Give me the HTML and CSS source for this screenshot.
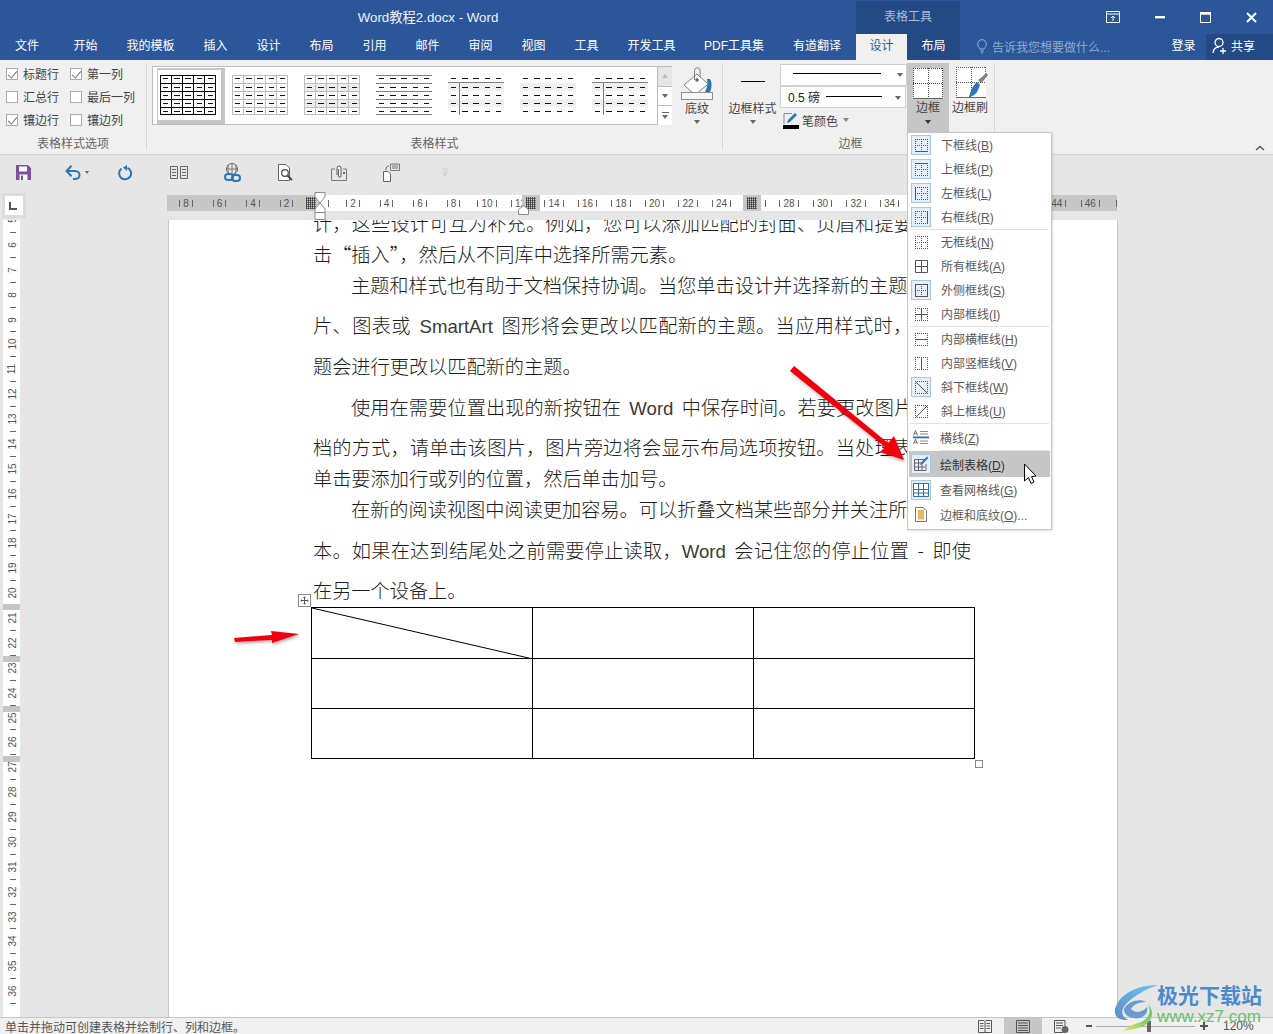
FILE: index.html
```html
<!DOCTYPE html>
<html lang="zh-CN">
<head>
<meta charset="utf-8">
<title>Word教程2.docx - Word</title>
<link rel="stylesheet" href="styles.css">
</head>
<body>
<svg class="defs" width="0" height="0" aria-hidden="true">
  <defs>
    <path id="dashes" d="M3 3.5H56M3 12.5H56M3 20.5H56M3 28.5H56M3 36.5H56" fill="none" stroke="#111" stroke-dasharray="5.4 5.8"/>
    <path id="dotgrid" d="M0 .5H13M0 6.5H13M0 12.5H13M.5 0V13M6.5 0V13M12.5 0V13" fill="none" stroke="#555" stroke-dasharray="1 1"/>
    <path id="dotbox" d="M0 .5H13M0 12.5H13M.5 0V13M12.5 0V13" fill="none" stroke="#555" stroke-dasharray="1 1"/>
  </defs>
</svg>

<header class="titlebar">
  <div class="title">Word教程2.docx - Word</div>
  <div class="context">表格工具</div>
  <div class="winbtns">
    <svg class="wb" width="14" height="12" viewBox="0 0 14 12"><path d="M.5 .5H13.500V11.500H.5ZM.5 3H13.500M7 10V5M5 7l2-2 2 2" fill="none" stroke="#fff"/></svg>
    <svg class="wb" width="10" height="3" viewBox="0 0 10 3"><rect width="10" height="2.400" fill="#fff"/></svg>
    <svg class="wb" width="11" height="11" viewBox="0 0 11 11"><path d="M.5 2H10.500V10.500H.5Z" fill="none" stroke="#fff"/><rect width="11" height="2.400" fill="#fff"/></svg>
    <svg class="wb" width="11" height="11" viewBox="0 0 11 11"><path d="M1 1L10 10M10 1L1 10" stroke="#fff" stroke-width="2"/></svg>
  </div>
</header>

<nav class="tabs">
  <a class="tab tab-file">文件</a>
  <a class="tab">开始</a>
  <a class="tab tab-4">我的模板</a>
  <a class="tab">插入</a>
  <a class="tab">设计</a>
  <a class="tab">布局</a>
  <a class="tab">引用</a>
  <a class="tab">邮件</a>
  <a class="tab">审阅</a>
  <a class="tab">视图</a>
  <a class="tab">工具</a>
  <a class="tab tab-4">开发工具</a>
  <a class="tab tab-pdf">PDF工具集</a>
  <a class="tab tab-yd">有道翻译</a>
  <a class="tab tab-active">设计</a>
  <a class="tab tab-dark">布局</a>
  <div class="tell">
    <svg width="10" height="15" viewBox="0 0 10 15"><path d="M3 10C2 8 .7 7.500 .7 5a4.300 4.300 0 0 1 8.600 0C9.300 7.500 8 8 7 10ZM3.200 12H6.800M4 14H6" fill="none" stroke="#9db4d6"/></svg>
    <span>告诉我您想要做什么...</span>
  </div>
  <a class="login">登录</a>
  <div class="share">
    <svg width="16" height="18" viewBox="0 0 16 18"><circle cx="7" cy="5.500" r="4" fill="none" stroke="#fff" stroke-width="1.300"/><path d="M1 16C1.500 12 4 10 7 10M11 11V17M8 14H14" fill="none" stroke="#fff" stroke-width="1.300"/></svg>
    <span>共享</span>
  </div>
</nav>

<section class="ribbon">
  <div class="group g-opts">
    <div class="group-body checks">
      <label class="chk"><i class="box on"></i>标题行</label>
      <label class="chk"><i class="box on"></i>第一列</label>
      <label class="chk"><i class="box"></i>汇总行</label>
      <label class="chk"><i class="box"></i>最后一列</label>
      <label class="chk"><i class="box on"></i>镶边行</label>
      <label class="chk"><i class="box"></i>镶边列</label>
    </div>
    <div class="group-label">表格样式选项</div>
  </div>

  <div class="group g-styles">
    <div class="group-body row">
      <div class="gallery">
        <div class="cell sel"><svg class="thumb" width="56" height="40"><path d="M.5 .5H55.500V39.500H.5ZM11.500 0V40M22.500 0V40M33.500 0V40M44.500 0V40M0 8.500H56M0 16.500H56M0 24.500H56M0 32.500H56" fill="none" stroke="#000"/><use href="#dashes"/></svg></div>
        <div class="cell"><svg class="thumb" width="56" height="40"><path d="M.5 .5H55.500V39.500H.5ZM11.500 0V40M22.500 0V40M33.500 0V40M44.500 0V40M0 8.500H56M0 16.500H56M0 24.500H56M0 32.500H56" fill="none" stroke="#bcbcbc"/><use href="#dashes"/></svg></div>
        <div class="cell"><svg class="thumb" width="56" height="40"><path d="M0 8H56V16H0ZM0 24H56V32H0Z" fill="#ededed"/><path d="M.5 .5H55.500V39.500H.5ZM11.500 0V40M22.500 0V40M33.500 0V40M44.500 0V40M0 8.500H56M0 16.500H56M0 24.500H56M0 32.500H56" fill="none" stroke="#bcbcbc"/><use href="#dashes"/></svg></div>
        <div class="cell"><svg class="thumb" width="56" height="40"><path d="M0 .5H56M0 8.500H56M0 16.500H56M0 24.500H56M0 32.500H56M0 39.500H56" fill="none" stroke="#808080"/><use href="#dashes"/></svg></div>
        <div class="cell"><svg class="thumb" width="56" height="40"><path d="M0 8H56V16H0ZM0 24H56V32H0Z" fill="#f0f0f0"/><path d="M0 7.500H56M11.500 8V40" fill="none" stroke="#808080"/><use href="#dashes"/></svg></div>
        <div class="cell"><svg class="thumb" width="56" height="40"><path d="M0 8H56V16H0ZM0 24H56V32H0Z" fill="#f0f0f0"/><use href="#dashes"/></svg></div>
        <div class="cell"><svg class="thumb" width="56" height="40"><path d="M0 8H56V16H0ZM0 24H56V32H0Z" fill="#f0f0f0"/><path d="M0 7.500H56M11.500 8V40" fill="none" stroke="#808080"/><use href="#dashes"/></svg></div>
        <div class="scroll">
          <div class="sc sc-off"><i class="up"></i></div>
          <div class="sc"><i class="caret"></i></div>
          <div class="sc sc-more"><b></b><i class="caret"></i></div>
        </div>
      </div>
      <div class="big b-shade">
        <div class="big-ic">
          <svg width="32" height="36" viewBox="0 0 32 36"><path d="M29 14c2 3 2 8 0 13h-5c2-4 3-8 2-13Z" fill="#2e75b6"/><path d="M16 9L3 20 14 30 27 19Z" fill="#fff" stroke="#808080"/><path d="M13.500 15V5.500a2.800 2.800 0 0 1 5.600 0V12" fill="none" stroke="#808080"/><circle cx="16" cy="15" r="1.800" fill="#666"/><rect x=".5" y="27.500" width="31" height="7" fill="#f7f7f7" stroke="#909090"/></svg>
        </div>
        <span>底纹</span><i class="caret"></i>
      </div>
    </div>
    <div class="group-label">表格样式</div>
  </div>

  <div class="group g-border">
    <div class="group-body row">
      <div class="big b-style">
        <div class="big-ic"><i class="hline"></i></div>
        <span>边框样式</span><i class="caret"></i>
      </div>
      <div class="pen">
        <div class="sel1"><i class="line l1"></i><i class="caret"></i></div>
        <div class="sel2"><span>0.5 磅</span><i class="line l2"></i><i class="caret"></i></div>
        <div class="pencolor">
          <svg width="16" height="17" viewBox="0 0 16 17"><path d="M1 12V1.500H9" fill="none" stroke="#888"/><path d="M4 11L5 8 12 1l2 2-7 7Z" fill="#2e75b6"/><rect y="13" width="16" height="4" fill="#000"/></svg>
          <span>笔颜色</span><i class="caret"></i>
        </div>
      </div>
      <div class="big b-frame">
        <div class="big-ic">
          <svg width="30" height="31" viewBox="0 0 30 31"><rect width="30" height="30" fill="#fff"/><path d="M0 .5H30M0 15.500H30M.5 0V30M15.500 0V30M29.500 0V30" fill="none" stroke="#444" stroke-dasharray="1 1"/><path d="M0 30.500H30" stroke="#666"/></svg>
        </div>
        <span>边框</span><i class="caret"></i>
      </div>
      <div class="big b-brush">
        <div class="big-ic">
          <svg width="32" height="33" viewBox="0 0 32 33"><rect width="30" height="30" fill="#fff"/><path d="M0 .5H30M0 15.500H30M.5 0V30M15.500 0V30M29.500 0V10" fill="none" stroke="#555" stroke-dasharray="1 1"/><path d="M0 30.500H30" stroke="#3a6ea5"/><path d="M26 10l4-4 2 2-4 5-3 3-3-3Z" fill="#808080"/><path d="M21 15l3 3-2 5c-1 3-4 6-9 7.500 1-5 3-11 8-15.500Z" fill="#2e75b6"/></svg>
        </div>
        <span>边框刷</span>
      </div>
    </div>
    <div class="group-label lab-border">边框</div>
  </div>

  <svg class="collapse" width="10" height="6" viewBox="0 0 10 6"><path d="M1 5L5 1.500 9 5" fill="none" stroke="#555" stroke-width="1.500"/></svg>
</section>

<section class="qat">
  <div class="q q-first"><svg width="15" height="15" viewBox="0 0 15 15"><path d="M0 0H12L15 3V15H0Z" fill="#7d52a6"/><rect x="3" y="1.500" width="8" height="5" fill="#fff"/><rect x="3.500" y="9.500" width="8" height="5.500" fill="#fff"/><rect x="5" y="10.500" width="2" height="4.500" fill="#7d52a6"/></svg></div>
  <div class="q q-undo"><svg width="16" height="15" viewBox="0 0 16 15"><path d="M2 6H10C13 6 14.500 8 14.500 10S13 14 10 14H8" fill="none" stroke="#2e75b6" stroke-width="2"/><path d="M6.500 .8L1.500 6 6.500 11.200" fill="none" stroke="#2e75b6" stroke-width="2"/></svg><i class="caret"></i></div>
  <div class="q"><svg width="15" height="16" viewBox="0 0 15 16"><path d="M9.500 2.800A6 6 0 1 1 3.500 3.500" fill="none" stroke="#2e75b6" stroke-width="2"/><path d="M9 0V6L5 2.500Z" fill="#2e75b6"/></svg></div>
  <div class="q"><svg width="18" height="13" viewBox="0 0 18 13"><path d="M.5 .5H7.500V12.500H.5ZM10.500 .5H17.500V12.500H10.500ZM2 3.500H6M2 6.500H6M2 9.500H6M12 3.500H16M12 6.500H16M12 9.500H16" fill="none" stroke="#666"/></svg></div>
  <div class="q"><svg width="17" height="19" viewBox="0 0 17 19"><circle cx="8" cy="6" r="5.500" fill="none" stroke="#666"/><path d="M2.500 6H13.500M8 .5V11.500M4.500 1.500C3.500 6 4 9 5 11M11.500 1.500C12.500 6 12 9 11 11" fill="none" stroke="#666" stroke-width=".8"/><rect x="1" y="11" width="8" height="6" rx="3" fill="none" stroke="#2e75b6" stroke-width="2"/><rect x="8" y="12" width="8" height="6" rx="3" fill="none" stroke="#2e75b6" stroke-width="2"/></svg></div>
  <div class="q"><svg width="15" height="17" viewBox="0 0 15 17"><path d="M.5 .5H8L11.500 4V16.500H.5Z" fill="#fff" stroke="#666"/><circle cx="7" cy="9" r="3.300" fill="#fff" stroke="#444" stroke-width="1.200"/><path d="M9.500 11.500L14 16" stroke="#444" stroke-width="1.800"/></svg></div>
  <div class="q"><svg width="16" height="16" viewBox="0 0 16 16"><path d="M4 4H.5V15.500H15.500V4H12" fill="none" stroke="#777"/><path d="M6 10V3a2 2 0 0 1 4 0V11a1.200 1.200 0 0 1-2.400 0V4" fill="#fff" stroke="#555"/><rect x="12" y="7" width="2" height="2" fill="#2e75b6"/></svg></div>
  <div class="q"><svg width="17" height="19" viewBox="0 0 17 19"><path d="M7.500 1H16.500V7.500H7.500ZM9 3H15M9 5H15" fill="none" stroke="#777"/><path d="M.5 8.500H5L7.500 11V18.500H.5Z" fill="#fff" stroke="#666"/><path d="M3 7C3 4 4 3 6 3" fill="none" stroke="#2e75b6"/></svg></div>
  <div class="q q-ghost"><svg width="8" height="9" viewBox="0 0 8 9"><path d="M1 1H7M1 4H7M2 6H6L4 8Z" fill="#d0d0d0" stroke="#d0d0d0"/></svg></div>
</section>

<section class="rulerbar">
  <div class="corner"><i></i></div>
  <div class="hruler">
    <div class="seg dark s1">
      <span class="n">8</span><span class="n">6</span><span class="n">4</span><span class="n">2</span><i class="hatch h-left"></i>
    </div>
    <div class="seg s2">
      <span class="lead"></span><span class="n">2</span><span class="n">4</span><span class="n">6</span><span class="n">8</span><span class="n">10</span><span class="n">12</span>
    </div>
    <div class="seg dark s3"><i class="hatch"></i></div>
    <div class="seg s4">
      <span class="n">14</span><span class="n">16</span><span class="n">18</span><span class="n">20</span><span class="n">22</span><span class="n">24</span>
    </div>
    <div class="seg dark s3"><i class="hatch"></i></div>
    <div class="seg s5">
      <span class="lead lead2"></span><span class="n">28</span><span class="n">30</span><span class="n">32</span><span class="n">34</span><span class="n">36</span><span class="n">38</span><span class="n">40</span><span class="n">42</span>
    </div>
    <div class="seg dark s6"><span class="n">44</span><span class="n">46</span><i class="tick-end"></i></div>
    <svg class="marker m-indent" width="12" height="28" viewBox="0 0 12 28"><path d="M1 .5H11V5L6 11 11 17V27.500H1V17L6 11 1 5Z" fill="#fff" stroke="#8a8a8a"/><path d="M1 20.500H11" stroke="#8a8a8a"/></svg>
    <svg class="marker m-right" width="11" height="10" viewBox="0 0 11 10"><path d="M.5 9.500V4.500L5.500 .5 10.500 4.500V9.500Z" fill="#fff" stroke="#8a8a8a"/></svg>
  </div>
</section>

<main class="workspace">
  <div class="vruler">
    <span class="vn"><b>5</b></span><span class="vd"></span>
    <span class="vn"><b>6</b></span><span class="vd"></span>
    <span class="vn"><b>7</b></span><span class="vd"></span>
    <span class="vn"><b>8</b></span><span class="vd"></span>
    <span class="vn"><b>9</b></span><span class="vd"></span>
    <span class="vn"><b>10</b></span><span class="vd"></span>
    <span class="vn"><b>11</b></span><span class="vd"></span>
    <span class="vn"><b>12</b></span><span class="vd"></span>
    <span class="vn"><b>13</b></span><span class="vd"></span>
    <span class="vn"><b>14</b></span><span class="vd"></span>
    <span class="vn"><b>15</b></span><span class="vd"></span>
    <span class="vn"><b>16</b></span><span class="vd"></span>
    <span class="vn"><b>17</b></span><span class="vd"></span>
    <span class="vn"><b>18</b></span><span class="vd"></span>
    <span class="vn"><b>19</b></span><span class="vd"></span>
    <span class="vn"><b>20</b></span><span class="vd"></span>
    <span class="vn"><b>21</b></span><span class="vd"></span>
    <span class="vn"><b>22</b></span><span class="vd"></span>
    <span class="vn"><b>23</b></span><span class="vd"></span>
    <span class="vn"><b>24</b></span><span class="vd"></span>
    <span class="vn"><b>25</b></span><span class="vd"></span>
    <span class="vn"><b>26</b></span><span class="vd"></span>
    <span class="vn"><b>27</b></span><span class="vd"></span>
    <span class="vn"><b>28</b></span><span class="vd"></span>
    <span class="vn"><b>29</b></span><span class="vd"></span>
    <span class="vn"><b>30</b></span><span class="vd"></span>
    <span class="vn"><b>31</b></span><span class="vd"></span>
    <span class="vn"><b>32</b></span><span class="vd"></span>
    <span class="vn"><b>33</b></span><span class="vd"></span>
    <span class="vn"><b>34</b></span><span class="vd"></span>
    <span class="vn"><b>35</b></span><span class="vd"></span>
    <span class="vn"><b>36</b></span><span class="vd"></span>
    <i class="band b1"></i><i class="band b2"></i><i class="band b3"></i><i class="band b4"></i>
  </div>
  <article class="page">
    <div class="text">
      <p class="ln">计，这些设计可互为补充。例如，您可以添加匹配的封面、页眉和提要栏。单</p>
      <p class="ln end">击“插入”，然后从不同库中选择所需元素。</p>
      <p class="ln ind end">主题和样式也有助于文档保持协调。当您单击设计并选择新的主题时，图</p>
      <p class="ln tall">片、图表或 <span class="la">SmartArt</span> 图形将会更改以匹配新的主题。当应用样式时，您的标</p>
      <p class="ln tall end">题会进行更改以匹配新的主题。</p>
      <p class="ln tall ind">使用在需要位置出现的新按钮在 <span class="la">Word</span> 中保存时间。若要更改图片适应文</p>
      <p class="ln tall">档的方式，请单击该图片，图片旁边将会显示布局选项按钮。当处理表格时，</p>
      <p class="ln end">单击要添加行或列的位置，然后单击加号。</p>
      <p class="ln ind end">在新的阅读视图中阅读更加容易。可以折叠文档某些部分并关注所需文</p>
      <p class="ln tall">本。如果在达到结尾处之前需要停止读取，<span class="la">Word</span> 会记住您的停止位置 - 即使</p>
      <p class="ln tall end">在另一个设备上。</p>
    </div>
    <div class="tablewrap">
      <svg class="movehandle" width="13" height="13" viewBox="0 0 13 13"><rect x=".5" y=".5" width="12" height="12" fill="#fff" stroke="#8a8a8a"/><path d="M6.500 2.500V10.500M2.500 6.500H10.500M5.500 3.500H7.500M5.500 9.500H7.500M3.500 5.500V7.500M9.500 5.500V7.500" stroke="#555"/></svg>
      <table class="doc-table">
        <tr class="r1"><td class="diag"><svg class="diag-line" width="221" height="51" viewBox="0 0 221 51"><path d="M0 0L221 51" stroke="#000" fill="none"/></svg></td><td></td><td></td></tr>
        <tr><td></td><td></td><td></td></tr>
        <tr><td></td><td></td><td></td></tr>
      </table>
      <i class="resizehandle"></i>
    </div>
  </article>
</main>

<footer class="status">
  <span class="status-text">单击并拖动可创建表格并绘制行、列和边框。</span>
  <div class="views">
    <div class="v"><svg width="14" height="13" viewBox="0 0 14 13"><path d="M.5 .5H6L7 1.500 8 .5H13.500V12.500H.5ZM7 1.500V12M2 3.500H5.500M2 6H5.500M2 8.500H5.500M8.500 3.500H12M8.500 6H12M8.500 8.500H12" fill="none" stroke="#555"/></svg></div>
    <div class="v v-on"><svg width="14" height="13" viewBox="0 0 14 13"><path d="M.5 .5H13.500V12.500H.5ZM2 3H12M2 5.500H12M2 8H12M2 10.500H12" fill="none" stroke="#555"/></svg></div>
    <div class="v"><svg width="15" height="13" viewBox="0 0 15 13"><path d="M9 12.500H.5V.5H11V6M2 3H9M2 5.500H9M2 8H7" fill="none" stroke="#555"/><circle cx="11" cy="9.500" r="3.500" fill="#666"/></svg></div>
  </div>
  <div class="zoom">
    <i class="zminus"></i>
    <div class="ztrack"><i class="zthumb"></i></div>
    <i class="zplus"></i>
    <span class="zval">120%</span>
  </div>
</footer>

<div class="menu">
  <div class="mrow"><span class="mi on"><svg width="13" height="13"><use href="#dotgrid"/><path d="M0 12.500H13" stroke="#555"/></svg></span><span class="mt">下框线(<u>B</u>)</span></div>
  <div class="mrow"><span class="mi on"><svg width="13" height="13"><use href="#dotgrid"/><path d="M0 .5H13" stroke="#555"/></svg></span><span class="mt">上框线(<u>P</u>)</span></div>
  <div class="mrow"><span class="mi on"><svg width="13" height="13"><use href="#dotgrid"/><path d="M.5 0V13" stroke="#555"/></svg></span><span class="mt">左框线(<u>L</u>)</span></div>
  <div class="mrow"><span class="mi on"><svg width="13" height="13"><use href="#dotgrid"/><path d="M12.500 0V13" stroke="#555"/></svg></span><span class="mt">右框线(<u>R</u>)</span></div>
  <div class="msep"></div>
  <div class="mrow"><span class="mi"><svg width="13" height="13"><use href="#dotgrid"/></svg></span><span class="mt">无框线(<u>N</u>)</span></div>
  <div class="mrow"><span class="mi"><svg width="13" height="13"><path d="M.5 .5H12.500V12.500H.5ZM6.500 0V13M0 6.500H13" fill="none" stroke="#555"/></svg></span><span class="mt">所有框线(<u>A</u>)</span></div>
  <div class="mrow"><span class="mi on"><svg width="13" height="13"><use href="#dotgrid"/><path d="M.5 .5H12.500V12.500H.5Z" fill="none" stroke="#555"/></svg></span><span class="mt">外侧框线(<u>S</u>)</span></div>
  <div class="mrow"><span class="mi"><svg width="13" height="13"><use href="#dotbox"/><path d="M6.500 0V13M0 6.500H13" fill="none" stroke="#555"/></svg></span><span class="mt">内部框线(<u>I</u>)</span></div>
  <div class="msep"></div>
  <div class="mrow"><span class="mi"><svg width="13" height="13"><use href="#dotbox"/><path d="M0 6.500H13" fill="none" stroke="#555"/></svg></span><span class="mt">内部横框线(<u>H</u>)</span></div>
  <div class="mrow"><span class="mi"><svg width="13" height="13"><use href="#dotbox"/><path d="M6.500 0V13" fill="none" stroke="#555"/></svg></span><span class="mt">内部竖框线(<u>V</u>)</span></div>
  <div class="mrow"><span class="mi on"><svg width="13" height="13"><use href="#dotbox"/><path d="M0 0L13 13" stroke="#555"/></svg></span><span class="mt">斜下框线(<u>W</u>)</span></div>
  <div class="mrow"><span class="mi"><svg width="13" height="13"><use href="#dotbox"/><path d="M13 0L0 13" stroke="#555"/></svg></span><span class="mt">斜上框线(<u>U</u>)</span></div>
  <div class="msep"></div>
  <div class="mrow m26"><span class="mi"><svg width="16" height="14" viewBox="0 0 16 14"><path d="M7 1.500H15M7 4H15M7 11H15M7 13.500H15" stroke="#888"/><rect y="6.500" width="16" height="1.800" fill="#2e6db4"/><path d="M.5 5.500L2.500 .5 4.500 5.500M1.300 3.800H3.700M.5 14L2.500 9 4.500 14M1.300 12.300H3.700" fill="none" stroke="#555" stroke-width=".8"/></svg></span><span class="mt mt2">横线(<u>Z</u>)</span></div>
  <div class="msep sep-short"></div>
  <div class="mrow m26 hover"><span class="mi on"><svg width="16" height="16" viewBox="0 0 16 16"><path d="M1.500 3.500H12M1.500 3.500V14.500H13V8M1.500 7H8M5.500 4V14M9 8V14M2 11H12" fill="none" stroke="#666"/><path d="M7 9L8 6.500 14 .5 15.500 2 9.500 8Z" fill="#2e75b6"/></svg></span><span class="mt mt2">绘制表格(<u>D</u>)</span></div>
  <div class="mrow m25"><span class="mi on"><svg width="16" height="14" viewBox="0 0 16 14"><rect width="16" height="3.500" fill="#2e6db4"/><path d="M.5 .5H15.500V13.500H.5ZM5.500 1V14M10.500 1V14M1 6.500H15M1 10H15" fill="#fff" stroke="#2e6db4"/></svg></span><span class="mt mt2">查看网格线(<u>G</u>)</span></div>
  <div class="mrow m25"><span class="mi"><svg width="12" height="15" viewBox="0 0 12 15"><path d="M.5 .5H8L11.500 3.500V14.500H.5Z" fill="#fff" stroke="#777"/><rect x="3" y="3" width="6" height="9.500" fill="#e8b95f"/></svg></span><span class="mt mt2">边框和底纹(<u>O</u>)...</span></div>
</div>

<svg class="overlay" width="1273" height="1034" viewBox="0 0 1273 1034" aria-hidden="true">
  <defs>
    <filter id="sh" x="-20%" y="-40%" width="140%" height="200%"><feDropShadow dx="1" dy="2" stdDeviation="1.500" flood-color="#000" flood-opacity=".3"/></filter>
    <linearGradient id="lgb" x1="0" y1="1" x2="1" y2="0"><stop offset="0" stop-color="#5d8fc9"/><stop offset="1" stop-color="#6fc5ee"/></linearGradient>
    <linearGradient id="lgg" x1="0" y1="1" x2="1" y2="0"><stop offset="0" stop-color="#e8e55a"/><stop offset=".6" stop-color="#7ccc6a"/><stop offset="1" stop-color="#5cc06a"/></linearGradient>
  </defs>
  <path d="M790 371L794 366 888 443 894 436 904 460 880 452 885 447Z" fill="#ee0010" filter="url(#sh)"/>
  <path d="M234 638L272 635 271 631 299 634 272 643 272 640 235 642Z" fill="#ee0010" filter="url(#sh)"/>
  <path d="M1024.500 464V481L1028.500 477.500 1031 483.500 1034 482 1031.500 476.500 1036 476Z" fill="#fff" stroke="#000"/>
  <path d="M1158 985C1140 985 1122 992 1116 1006 1112 1015 1118 1021 1128 1020 1121 1016 1120 1010 1127 1003 1134 996 1146 989 1158 985Z" fill="url(#lgb)"/>
  <path d="M1124 1009C1128 1001 1140 998 1146 1002 1138 1002 1133 1005 1131 1009 1136 1014 1143 1012 1147 1007 1149 1014 1141 1020 1133 1018 1128 1017 1124 1014 1124 1009Z" fill="#6a9ad0"/>
  <path d="M1134 1029C1150 1027 1157 1014 1148 1004 1153 1014 1146 1021 1138 1023 1134 1024 1130 1026 1123 1031 1127 1030 1131 1030 1134 1029Z" fill="url(#lgg)"/>
</svg>
<div class="wm">
  <span class="wm1">极光下载站</span>
  <span class="wm2">www.xz7.com</span>
</div>
</body>
</html>
```

FILE: styles.css
```css
* { box-sizing: border-box; }
html, body { margin: 0; padding: 0; }
body {
  width: 1273px;
  height: 1034px;
  overflow: hidden;
  position: relative;
  display: flex;
  flex-direction: column;
  background: #e6e6e6;
  font-family: "Liberation Sans", "Noto Sans CJK SC", sans-serif;
  font-size: 12px;
  color: #444;
}
i { display: block; font-style: normal; }
.defs { position: absolute; }

/* title bar */
.titlebar { height: 34px; flex: none; display: flex; background: #2b579a; color: #fff; }
.title { width: 856px; height: 34px; line-height: 35px; text-align: center; font-size: 13.300px; color: #eef2f8; }
.context { width: 104px; margin-top: 1px; height: 33px; line-height: 33px; text-align: center; background: #234a85; color: #a9bcd8; }
.winbtns { flex: 1; display: flex; align-items: center; }
.wb:nth-child(1) { margin-left: 146px; }
.wb:nth-child(2) { margin-left: 35px; }
.wb:nth-child(3) { margin-left: 35px; }
.wb:nth-child(4) { margin-left: 35px; }

/* tabs */
.tabs { height: 26px; flex: none; display: flex; background: #2b579a; color: #fff; }
.tab { width: 53px; text-align: center; line-height: 24px; flex: none; }
.tab-4 { width: 77px; }
.tab-pdf { width: 88px; }
.tab-yd { width: 78px; }
.tab-file { width: 59px; padding-right: 5px; }
.tab-active { width: 51px; background: #f0f0f0; color: #2b579a; }
.tab-dark { background: #234a85; }
.tell { width: 201px; display: flex; align-items: center; gap: 5px; padding-left: 17px; padding-bottom: 1px; color: #90a9cf; }
.login { width: 45px; text-align: center; line-height: 24px; }
.share { flex: 1; display: flex; align-items: center; gap: 3px; padding: 0 0 3px 6px; background: #234a85; }

/* ribbon */
.ribbon { height: 95px; flex: none; display: flex; background: #f0f0f0; border-bottom: 1px solid #d2d2d2; padding-top: 3px; }
.group { height: 87px; display: flex; flex-direction: column; border-right: 1px solid #d8d8d8; }
.group-body { height: 73px; }
.group-label { height: 14px; line-height: 15px; padding-top: 1px; text-align: center; color: #666; }
.row { display: flex; }
.g-opts { width: 147px; }
.checks { display: grid; grid-template-columns: 64px auto; grid-auto-rows: 23px; padding-left: 6px; margin-top: -1px; height: 74px; }
.chk { display: flex; align-items: center; gap: 5px; }
.box { width: 12px; height: 12px; border: 1px solid #ababab; background: #fff; position: relative; margin-top: 1px; }
.box.on::after {
  content: ""; position: absolute; left: 3px; top: 0; width: 4px; height: 8px;
  border: solid #777; border-width: 0 1.300px 1.300px 0; transform: rotate(40deg);
}
.g-styles { width: 576px; }
.gallery { width: 520px; height: 59px; margin: 3px 0 0 5px; padding-top: 1px; display: flex; background: #fff; border: 1px solid #bcbcbc; }
.cell { width: 72px; height: 56px; flex: none; display: flex; justify-content: center; align-items: center; padding: 0 2px 2px 0; }
.cell.sel {
  width: 68px; margin-left: 4px; justify-content: flex-start; padding: 0 0 0 2px;
  border: solid #c6c6c6; border-width: 2px 4px 4px 1px;
}
.thumb { display: block; shape-rendering: crispEdges; }
.scroll { flex: none; width: 15px; margin: -1px -1px -1px auto; display: flex; flex-direction: column; border-left: 1px solid #bcbcbc; }
.sc { flex: 1; display: flex; flex-direction: column; align-items: center; justify-content: center; background: #fff; border-top: 1px solid #bcbcbc; }
.sc:first-child { border-top: 0; }
.sc-off { background: #e6e6e6; }
.up { width: 0; height: 0; border: solid transparent; border-width: 0 3px 4px; border-bottom-color: #bbb; }
.sc-more b { display: block; width: 7px; height: 1px; background: #666; margin-bottom: 2px; }
.caret { width: 0; height: 0; border: solid transparent; border-width: 4px 3.500px 0; border-top-color: #666; flex: none; }

.big { display: flex; flex-direction: column; align-items: center; height: 69px; flex: none; }
.big-ic { height: 37px; display: flex; align-items: center; justify-content: center; }
.big span { height: 16px; line-height: 16px; white-space: nowrap; }
.big .caret { margin-top: 4px; }
.b-shade .big-ic, .b-style .big-ic { height: 38px; }
.b-shade .caret, .b-style .caret { margin-top: 3px; }
.b-shade { width: 36px; margin-left: 7px; }
.b-shade .big-ic { padding-top: 2px; }
.b-style .big-ic { padding-bottom: 1px; }
.g-border { width: 272px; }
.b-style { width: 49px; margin-left: 5px; }
.hline { width: 24px; height: 1px; background: #000; }
.pen { width: 127px; margin-left: 3px; }
.sel1, .sel2 { position: relative; display: flex; align-items: center; background: #fff; border: 1px solid #d0d0d0; }
.sel1 { height: 22px; margin-top: 1px; padding-left: 12px; }
.sel2 { height: 22px; width: 126px; padding: 0 0 2px 7px; color: #222; }
.line { height: 1px; background: #000; }
.l1 { width: 88px; margin-bottom: 3px; }
.l2 { width: 56px; margin-left: 6px; }
.sel1 .caret { position: absolute; right: 3px; top: 8px; }
.sel2 .caret { position: absolute; right: 4px; top: 9px; }
.pencolor { height: 22px; margin-top: 1px; padding-left: 3px; display: flex; align-items: center; }
.pencolor span { margin-left: 3px; }
.pencolor .caret { margin-left: 5px; border-top-color: #888; }
.b-frame { width: 42px; background: #c6c6c6; }
.b-frame .big-ic { padding-top: 3px; }
.b-frame .caret { border-top-color: #333; }
.b-brush { width: 38px; margin-left: 2px; }
.b-brush .big-ic { padding-top: 3px; padding-left: 3px; }
.lab-border { padding-right: 16px; }
.collapse { margin: auto 8px 3px auto; align-self: flex-end; }

/* quick access */
.qat { height: 35px; flex: none; display: flex; align-items: center; background: #e6e6e6; }
.q { width: 53.200px; display: flex; justify-content: center; align-items: center; flex: none; }
.q-first { width: 46px; }
.q-undo { gap: 4px; padding-left: 9px; }
.q-undo .caret { border-width: 3px 2.500px 0; }

/* rulers */
.rulerbar { height: 30px; flex: none; display: flex; background: #e6e6e6; }
.corner { width: 24px; height: 25px; margin: 3px 0 0 2px; background: #fff; border: 3px solid #dcdcdc; position: relative; flex: none; }
.corner i { position: absolute; left: 4px; top: 6px; width: 8px; height: 8px; border: solid #555; border-width: 0 0 2px 2px; }
.hruler { margin: 5px 0 0 141px; height: 16px; display: flex; position: relative; width: 950px; }
.seg { height: 16px; display: flex; align-items: center; background: #fff; overflow: hidden; flex: none; }
.dark { background: #c6c6c6; }
.n { width: 33.500px; flex: none; display: flex; justify-content: center; align-items: center; gap: 3px; font-size: 10px; color: #555; line-height: 16px; padding-top: 1px; }
.n::before, .n::after, .lead::before, .tick-end { content: ""; display: block; width: 1px; height: 7px; background: #666; }
.lead { flex: none; width: 16.250px; padding-left: 8px; }
.lead2 { width: 11.250px; padding-left: 4px; }
.s1 { width: 153px; padding-left: 2.250px; }
.s2 { width: 202px; }
.s3 { width: 18px; justify-content: center; }
.s4 { width: 203px; }
.s4 .n:first-child { margin-left: -2.750px; }
.s5 { width: 279px; }
.s6 { width: 77px; }
.tick-end { margin-left: auto; }
.hatch {
  width: 10px; height: 12px; flex: none;
  background: repeating-linear-gradient(90deg, #777 0 1px, transparent 1px 2px), repeating-linear-gradient(0deg, #777 0 1px, #c6c6c6 1px 2px);
  background-blend-mode: multiply;
}
.h-left { margin-left: 3px; }
.marker { position: absolute; }
.m-indent { left: 147px; top: -3px; }
.m-right { left: 351px; top: 10px; }

/* workspace */
.workspace { flex: 1; min-height: 0; display: flex; background: #e6e6e6; overflow: hidden; }
.vruler { width: 17px; margin-left: 3px; padding-left: 2px; background: #fff; flex: none; position: relative; height: 100%; overflow: hidden; display: flex; flex-direction: column; }
.vn, .vd { height: 12.450px; flex: none; display: flex; align-items: center; justify-content: center; }
.vn:first-child { margin-top: -6.200px; }
.vn b { font-weight: 400; font-size: 10px; color: #555; line-height: 10px; transform: rotate(-90deg); white-space: nowrap; }
.vd::before { content: ""; display: block; width: 6px; height: 1px; background: #666; }
.band { position: absolute; left: 0; right: 0; height: 6px; background: #c6c6c6; }
.b1 { top: 384px; }
.b2 { top: 436px; }
.b3 { top: 486px; }
.b4 { top: 536px; }
.page { width: 950px; margin-left: 148px; height: 100%; flex: none; background: #fff; border: solid #c6c6c6; border-width: 0 1px; padding-left: 144px; overflow: hidden; }
.text { width: 658px; margin-top: -11.700px; font-family: "Noto Sans CJK SC", sans-serif; font-weight: 300; font-size: 19.200px; color: #1c1c1c; word-spacing: 4px; }
.ln { margin: 0; line-height: 30.700px; height: 30.700px; text-align: justify; text-align-last: justify; white-space: nowrap; }
.tall { height: 40.700px; padding-top: 10px; }
.end { text-align-last: left; }
.ind { text-indent: 38px; }
.la { font-family: "Liberation Sans", sans-serif; font-weight: 400; font-size: 18.600px; color: #3a3a3a; }
.tablewrap { position: relative; width: 664px; margin: 1px 0 0 -2px; }
.doc-table { border-collapse: collapse; width: 664px; table-layout: fixed; }
.doc-table td { border: 1px solid #000; height: 50px; padding: 0; position: relative; }
.doc-table .r1 td { height: 51px; }
.diag-line { position: absolute; left: 0; top: 0; display: block; }
.movehandle { position: absolute; left: -13px; top: -13px; display: block; }
.resizehandle { position: absolute; left: 664px; top: 153px; width: 8px; height: 8px; background: #fff; border: 1px solid #8a8a8a; }

/* status bar */
.status { height: 17px; flex: none; display: flex; align-items: center; background: #f0f0f0; border-top: 1px solid #c6c6c6; padding-left: 5px; color: #555; }
.status-text { width: 956px; flex: none; white-space: nowrap; }
.views { display: flex; height: 16px; margin-left: 5px; }
.v { width: 38px; display: flex; align-items: center; justify-content: center; }
.v-on { background: #c6c6c6; }
.zoom { display: flex; align-items: center; margin-left: 6px; }
.zminus { width: 6px; height: 2px; background: #555; }
.ztrack { width: 99px; height: 1px; background: #aaa; margin-left: 4px; position: relative; }
.zthumb { position: absolute; left: 51px; top: -5px; width: 4px; height: 11px; background: #666; }
.zplus { width: 8px; height: 8px; margin-left: 5px; background: linear-gradient(#555,#555) center/8px 2px no-repeat, linear-gradient(#555,#555) center/2px 8px no-repeat; }
.zval { margin-left: 15px; color: #555; }

/* border dropdown */
.menu { position: absolute; left: 907px; top: 132px; width: 145px; height: 398px; background: #fff; border: 1px solid #c6c6c6; box-shadow: 1px 1px 2px rgba(0,0,0,.12); z-index: 5; }
.mrow { height: 24px; display: flex; align-items: center; padding-left: 2px; margin-right: 1px; color: #5a5a5a; white-space: nowrap; }
.mi { width: 20px; height: 20px; margin-left: 1px; display: flex; align-items: center; justify-content: center; border: 1px solid transparent; flex: none; }
.mi.on { border-color: #a6c5e8; background: #e6effa; }
.mi svg { display: block; }
.mt { margin-left: 10px; padding-bottom: 2px; }
.mt2 { margin-left: 9px; padding-bottom: 0; }
.msep { height: 1px; margin: 0 2px; background: #e2e2e2; }
.m26 { height: 26px; }
.m25 { height: 25px; }
.hover { background: #c6c6c6; margin-left: 1px; padding-left: 1px; color: #333; }
.sep-short { margin-left: 32px; }

/* overlays */
.overlay { position: absolute; left: 0; top: 0; z-index: 6; pointer-events: none; }
.wm { position: absolute; left: 1157px; top: 981px; z-index: 7; display: flex; flex-direction: column; }
.wm1 { font-family: "Noto Sans CJK SC", sans-serif; font-weight: 700; font-size: 21px; line-height: 26px; color: #4a8ccb; white-space: nowrap; }
.wm2 { font-family: "Liberation Sans", sans-serif; font-size: 17px; line-height: 20px; color: #66c26e; white-space: nowrap; }
```
